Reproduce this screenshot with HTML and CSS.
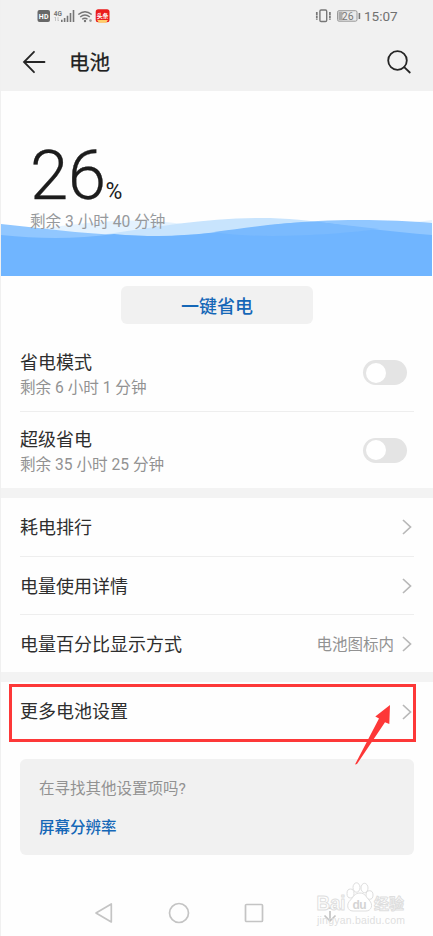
FILE: index.html
```html
<!DOCTYPE html>
<html lang="zh-CN">
<head>
<meta charset="utf-8">
<title>电池</title>
<link rel="stylesheet" href="styles.css">
</head>
<body>
<div class="screen">
  <header class="header">
    <div class="status">
      <div class="status-left">
        <svg width="76" height="20" viewBox="0 0 76 20">
          <rect x="0.500" y="4" width="12.500" height="12" rx="2" fill="#686868"/>
          <text class="hd" x="1.800" y="12.800" textLength="9.800">HD</text>
          <text class="net" x="16.800" y="9.500">4G</text>
          <path d="M18.500 11v4M17.500 12l1-1M21 11v4M22 14l-1 1" stroke="#bbb" stroke-width=".8" fill="none"/>
          <path d="M24.800 16v-2.200M27.600 16v-4M30.500 16V9.700M33.500 16V7M36.500 16V4" stroke="#757575" stroke-width="1.600"/>
          <path d="M41.300 8.500Q48 2.800 54.700 8.500M43.200 11Q48 7 52.800 11M45.200 13.300Q48 11 50.500 13.300" fill="none" stroke="#757575" stroke-width="1.400"/>
          <circle cx="48" cy="15" r="1.200" fill="#757575"/><circle cx="53.500" cy="14.600" r="1.300" fill="#999"/>
          <rect x="58.700" y="3.300" width="13.800" height="13" rx="2.500" fill="#ea1d1d"/>
          <path d="M60 14h11l-2 2.800h-7z" fill="#ffce6a"/>
          <text class="app" x="59.800" y="12.300" textLength="11.600">头条</text>
        </svg>
      </div>
      <div class="status-right">
        <svg width="46" height="16" viewBox="0 0 46 16">
          <rect x="4.900" y="2" width="6.800" height="11.500" rx="1.200" fill="none" stroke="#777" stroke-width="1.400"/>
          <path d="M1.800 4v8M14.900 4v8" stroke="#777" stroke-width="1.700" stroke-dasharray="3 .6"/>
          <rect x="22.500" y="2.700" width="19.500" height="10.500" rx="1.500" fill="#eaeaea" stroke="#999"/>
          <rect x="23.500" y="3.700" width="4" height="8.500" fill="#aaa"/>
          <path d="M44.400 5v6" stroke="#777" stroke-width="1.600"/>
          <text class="level" x="26.800" y="11.700">26</text>
        </svg>
        <span class="clock">15:07</span>
      </div>
    </div>
    <div class="toolbar">
      <svg width="24" height="24" viewBox="0 0 24 24"><path d="M12 1.800 2 12l10 10.200M2 12h20.500" class="line"/></svg>
      <h1>电池</h1>
      <svg width="26" height="26" viewBox="0 0 26 26"><circle cx="11.500" cy="11.500" r="9.300" class="line"/><path d="m18.200 18.200 5.600 5.300" class="line"/></svg>
    </div>
  </header>

  <section class="hero">
    <svg class="waves" width="431" height="60" viewBox="0 216 431 60">
      <path d="M0 232C55 228 90 220 140 220.500C190 221 220 236 265 235C330 233 380 226 432 220V276H0Z" fill="#e4f2fe"/>
      <path d="M0 235C35 239 70 239 110 233.500C155 227 205 218 260 218C310 218 360 229 432 235V276H0Z" fill="#c8e4fd"/>
      <path d="M0 224C50 229 95 236 158 236C215 236 265 223 317 221C360 219 400 220.500 432 223V276H0Z" fill="#91c7ff"/>
      <path d="M0 235C40 239 75 239 113 234C128 235.500 142 236 158 236C215 236 265 223 317 222C355 227 390 232 432 235V276H0Z" fill="#70b5ff"/>
      <path d="M213 232C250 227 283 222 317 222L378 229C340 234 260 240 213 232Z" fill="#7abafe"/>
    </svg>
    <div class="percent"><span class="num">26</span><span class="sign">%</span></div>
    <div class="remain">剩余 3 小时 40 分钟</div>
  </section>

  <div class="action"><button class="save">一键省电</button></div>

  <section class="group">
    <div class="row tall"><div><div class="name">省电模式</div><div class="sub">剩余 6 小时 1 分钟</div></div><span class="switch"></span></div>
    <div class="row tall"><div><div class="name">超级省电</div><div class="sub">剩余 35 小时 25 分钟</div></div><span class="switch"></span></div>
  </section>
  <div class="band"></div>
  <section class="group">
    <div class="row"><div class="name">耗电排行</div><svg class="chev" width="12" height="18" viewBox="0 0 12 18"><path d="m2 2 7.500 7L2 16"/></svg></div>
    <div class="row"><div class="name">电量使用详情</div><svg class="chev" width="12" height="18" viewBox="0 0 12 18"><path d="m2 2 7.500 7L2 16"/></svg></div>
    <div class="row"><div class="name">电量百分比显示方式</div><span class="value">电池图标内</span><svg class="chev" width="12" height="18" viewBox="0 0 12 18"><path d="m2 2 7.500 7L2 16"/></svg></div>
  </section>
  <div class="band"></div>
  <div class="marked">
    <div class="name">更多电池设置</div>
    <svg class="chev" width="12" height="18" viewBox="0 0 12 18"><path d="m2 2 7.500 7L2 16"/></svg>
    <svg class="arrow" width="40" height="64" viewBox="352 703 40 64"><path d="M390 705 375.300 716.500 379 718.500 355 764.500 357 764 385 722.300 389.300 724Z" fill="#fd3838"/></svg>
  </div>

  <section class="card">
    <div class="ask">在寻找其他设置项吗?</div>
    <a class="link">屏幕分辨率</a>
  </section>

  <nav class="nav">
    <svg width="20" height="22" viewBox="0 0 20 22"><path d="M17.300 2v18L2 11Z"/></svg>
    <svg width="22" height="22" viewBox="0 0 22 22"><circle cx="11" cy="11" r="9.500"/></svg>
    <svg width="20" height="20" viewBox="0 0 20 20"><rect x="1.500" y="1.500" width="17" height="17" rx="1"/></svg>
    <svg class="down" width="16" height="22" viewBox="0 0 16 22"><path d="M2 6h12M8 9v10M2.500 13.500 8 19l5.500-5.500"/></svg>
    <svg class="mark" width="96" height="46" viewBox="0 0 96 46">
      <g fill="#fff" stroke="#dedede" stroke-width="1">
        <ellipse cx="37.500" cy="12.500" rx="3.500" ry="4.500"/><ellipse cx="43.500" cy="6.500" rx="3.500" ry="4.700"/><ellipse cx="51.500" cy="7" rx="3.500" ry="4.700"/><ellipse cx="56.500" cy="14" rx="3.500" ry="4.300"/>
        <path d="M47 12c5 0 6 4 9 7 5 5 2 11-3 11H40c-6 0-7-7-2.500-11 3-3 4-7 9.500-7Z"/>
        <text class="brand" x="3.500" y="29" textLength="29" lengthAdjust="spacingAndGlyphs">Bai</text>
        <text class="brand cn" x="61" y="27.500" textLength="30">经验</text>
      </g>
      <text class="du" x="39.500" y="27.500" textLength="14">du</text>
      <text class="url" x="4" y="42.500" textLength="88">jingyan.baidu.com</text>
    </svg>
  </nav>
</div>
</body>
</html>
```
FILE: styles.css
```css
* { box-sizing: border-box; }
body {
  margin: 0;
  background: #fefefe;
  color: #2c2c2c;
  font-family: Roboto, "Noto Sans CJK SC", sans-serif;
}
svg { display: block; flex: none; }
.screen {
  width: 433px;
  height: 936px;
  border-left: 1px solid #f0f0f0;
  display: flex;
  flex-direction: column;
  overflow: hidden;
}
.header { height: 91px; flex: none; background: #f1f1f1; }
.status {
  height: 32px;
  display: flex;
  align-items: center;
  justify-content: space-between;
  padding: 0 35px 0 36px;
}
.status-right { display: flex; align-items: center; gap: 3px; }
.clock { font-size: 13.500px; line-height: 16px; color: #707070; width: 34px; white-space: nowrap; }
.hd { font: bold 7px Roboto; fill: #fff; }
.net { font: bold 6.500px Roboto; fill: #777; }
.app { font: bold 6px "Noto Sans CJK SC"; fill: #fff; }
.level { font: 10.500px Roboto; fill: #777; }
.toolbar {
  height: 60px;
  display: flex;
  align-items: center;
  padding: 0 21px 0 21px;
}
.toolbar h1 {
  margin: 2px 0 0 23px;
  flex: 1;
  font-size: 20.500px;
  line-height: 30px;
  font-weight: 400;
  color: #202020;
  -webkit-text-stroke: .25px #202020;
}
.line { fill: none; stroke: #252525; stroke-width: 1.800; stroke-linecap: round; }
.hero {
  height: 185px;
  flex: none;
  position: relative;
  padding: 50px 0 0 29px;
}
.waves { position: absolute; left: 0; bottom: 0; }
.percent { position: relative; height: 70px; display: flex; align-items: baseline; color: #1c1c1c; }
.num { font-size: 69px; line-height: 70px; font-weight: 300; letter-spacing: -0.500px; -webkit-text-stroke: .3px #1c1c1c; }
.sign { font-size: 23px; line-height: 30px; }
.remain { position: relative; font-size: 15.600px; line-height: 22px; color: #96999c; white-space: pre; }
.action { height: 58px; flex: none; padding-top: 10px; display: flex; justify-content: center; align-items: flex-start; }
.save {
  width: 192px;
  height: 38px;
  border: 0;
  border-radius: 6px;
  background: #f1f1f1;
  color: #1567b7;
  font: 500 18px "Noto Sans CJK SC", sans-serif;
  padding: 0;
}
.group { padding: 0 19px; flex: none; }
.row { height: 58px; display: flex; align-items: center; padding: 2px 1px 0 0; }
.row + .row { border-top: 1px solid #eee; }
.row.tall { height: 77px; justify-content: space-between; padding: 4px 7px 0 0; }
.name { font-size: 18px; line-height: 26px; color: #2e2e2e; flex: 1; }
.sub { font-size: 15.600px; line-height: 24px; color: #929292; }
.switch { width: 44px; height: 25px; border-radius: 13px; background: #e4e4e4; padding: 2.500px; margin-bottom: 4px; }
.switch::before { content: ""; display: block; width: 20px; height: 20px; border-radius: 50%; background: #fff; }
.value { font-size: 15.500px; color: #929292; margin: 0 7px 3px 0; }
.chev { margin-bottom: 2px; }
.chev path { fill: none; stroke: #b8b8b8; stroke-width: 1.700; }
.band { height: 10px; flex: none; background: #f3f3f3; }
.marked {
  position: relative;
  flex: none;
  height: 58px;
  margin: 2px 17px 0 8px;
  padding: 0 0 2px 8px;
  border: 3px solid #fd3838;
  display: flex;
  align-items: center;
}
.marked .chev { margin-bottom: 1px; }
.arrow { position: absolute; left: 340px; top: 16px; }
.card {
  flex: none;
  height: 96px;
  margin: 17px 19px 0 19px;
  padding: 18px 19px;
  border-radius: 6px;
  background: #f1f1f1;
}
.ask { font-size: 15.500px; line-height: 25px; color: #929292; }
.link { display: block; margin-top: 14px; font-size: 15.500px; line-height: 25px; font-weight: 500; color: #1567b7; }
.nav {
  position: relative;
  flex: none;
  height: 80px;
  padding: 36px 0 0 93px;
  display: flex;
  align-items: center;
}
.nav > svg { fill: none; stroke: #c4c4c4; stroke-width: 1.700; stroke-linejoin: round; }
.nav > svg:nth-child(2) { margin-left: 54px; }
.nav > svg:nth-child(3) { margin-left: 54px; }
.nav > .down { margin-left: 58px; }
.nav > .mark { position: absolute; left: 312px; top: 26px; stroke: none; }
.brand { font: bold 20px "Liberation Sans"; }
.brand.cn { font: bold 15px "Noto Sans CJK SC"; }
.du { font: bold 12px "Liberation Sans"; fill: #d4d4d4; }
.url { font: 10.500px "Liberation Sans"; fill: #dedede; }
```
